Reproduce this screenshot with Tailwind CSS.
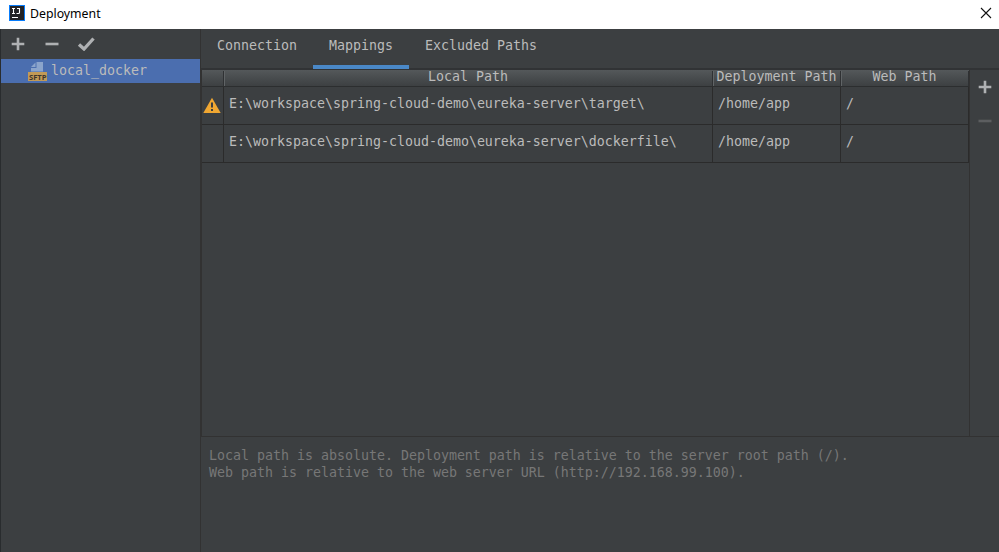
<!DOCTYPE html>
<html lang="en">
<head>
<meta charset="utf-8">
<title>Deployment</title>
<script src="https://cdn.jsdelivr.net/npm/@tailwindcss/browser@4"></script>
</head>
<body class="w-[999px] h-[552px] overflow-hidden flex flex-col bg-[#3c3f41] text-[#bbbbbb] font-['DejaVu_Sans_Mono',monospace] text-[13.29px] leading-4">
<header class="h-[29px] shrink-0 bg-white flex items-center text-black pl-[9px] pr-[7px] pb-[3px]">
<svg class="w-4 h-4 shrink-0" viewBox="0 0 16 16"><rect width="16" height="16" fill="#087cfa"/><rect x="1" y="1" width="14" height="14" fill="#222225"/><path d="M3 3.500h3M4.500 3.500v5M3 8.500h3M8 3.500h2.500v4q0 1-1 1H7.500" fill="none" stroke="#fff" stroke-width="1.100"/><path d="M3 12.500h6" stroke="#fff"/></svg>
<h1 class="ml-[5px] mt-[2px] grow font-['Noto_Sans',sans-serif] text-[12.3px] leading-4">Deployment</h1>
<svg class="w-3 h-3" viewBox="0 0 12 12"><path d="M1 1l10 10M11 1L1 11" stroke="#111" stroke-width="1.100"/></svg>
</header>
<div class="flex grow min-h-0 border-l border-[#292c2e]">
<aside class="w-[199px] shrink-0">
<div class="h-[30px] flex items-center pl-[10px]">
<svg class="w-[14px] h-[14px]" viewBox="0 0 14 14"><path d="M7 .7v12.600M.7 7h12.600" stroke="#afb1b3" stroke-width="2.600"/></svg>
<svg class="ml-5 w-[14px] h-[14px]" viewBox="0 0 14 14"><path d="M.5 7h13" stroke="#afb1b3" stroke-width="2.600"/></svg>
<svg class="ml-[18px] w-[18px] h-[14px]" viewBox="0 0 18 14"><path d="M2 7.500l5 4.500L16.500 1.500" fill="none" stroke="#afb1b3" stroke-width="3.300"/></svg>
</div>
<div class="h-6 bg-[#4b6eaf] flex items-center pl-[27px]">
<svg class="w-[19px] h-[22px] shrink-0 mt-px overflow-visible" viewBox="0 -1 19 22"><path d="M8.500 0H15v9.500H3V6h5.500z" fill="#8ba4cb"/><path d="M7.500 .5v4.500h-4.500z" fill="#8ba4cb"/><rect y="10" width="19" height="9" fill="#c29a56"/><text x="1" y="17.600" font-family="Open Sans, sans-serif" font-weight="700" font-size="7.600" fill="#3d352b">SFTP</text></svg>
<span class="ml-[4px]">local_docker</span>
</div>
</aside>
<main class="grow min-w-0 flex flex-col border-l border-[#323232]">
<nav class="h-[41px] shrink-0 border-b-2 border-[#313335] flex">
<div class="w-28 pl-4 pt-[9px]">Connection</div>
<div class="w-24 h-10 border-b-4 border-[#4a88c7] text-center pt-[9px]">Mappings</div>
<div class="pl-4 pt-[9px]">Excluded Paths</div>
</nav>
<div class="flex h-[367px] shrink-0 border-b border-[#323232]">
<div class="w-[768px] border-l border-[#323232]">
<div class="grid grid-cols-[22px_489px_128px_128px] h-[17px] border-b border-[#2c2e2f] bg-linear-to-b from-[#54585a] to-[#3d4042] text-center leading-[11px]">
<div class="border-r border-[#2f3133] h-[15px] mt-px"></div>
<div class="border-r border-[#2f3133] h-[15px] mt-px shadow-[inset_1px_0_#606466]">Local Path</div>
<div class="border-r border-[#2f3133] h-[15px] mt-px shadow-[inset_1px_0_#606466]">Deployment Path</div>
<div class="border-r border-[#2f3133] h-[15px] mt-px shadow-[inset_1px_0_#606466]">Web Path</div>
</div>
<div class="grid grid-cols-[22px_489px_128px_128px] h-[38px] border-b border-[#2b2b2b] leading-[33px]">
<div class="border-r border-[#2b2b2b] pt-[10px]"><svg class="block w-[20px] h-[17px]" viewBox="0 0 20 17"><path d="M10 .8L18.700 16H1.300z" fill="#f0a732"/><path d="M9 5.500h2v5H9zM9 12h2v2H9z" fill="#3c3f41"/></svg></div>
<div class="border-r border-[#2b2b2b] pl-[5px]">E:\workspace\spring-cloud-demo\eureka-server\target\</div>
<div class="border-r border-[#2b2b2b] pl-[5px]">/home/app</div>
<div class="border-r border-[#2b2b2b] pl-[5px]">/</div>
</div>
<div class="grid grid-cols-[22px_489px_128px_128px] h-[38px] border-b border-[#2b2b2b] leading-[33px]">
<div class="border-r border-[#2b2b2b]"></div>
<div class="border-r border-[#2b2b2b] pl-[5px]">E:\workspace\spring-cloud-demo\eureka-server\dockerfile\</div>
<div class="border-r border-[#2b2b2b] pl-[5px]">/home/app</div>
<div class="border-r border-[#2b2b2b] pl-[5px]">/</div>
</div>
</div>
<div class="grow border-l border-[#323232] flex flex-col items-center pt-[10px] gap-[20px]">
<svg class="w-[14px] h-[14px]" viewBox="0 0 14 14"><path d="M7 .7v12.600M.7 7h12.600" stroke="#afb1b3" stroke-width="2.600"/></svg>
<svg class="w-[14px] h-[14px]" viewBox="0 0 14 14"><path d="M.5 7h13" stroke="#5c5e60" stroke-width="2.600"/></svg>
</div>
</div>
<p class="pl-2 pt-[10px] text-[#777777] leading-[17px]">Local path is absolute. Deployment path is relative to the server root path (/).<br>Web path is relative to the web server URL (http://192.168.99.100).</p>
</main>
</div>
</body>
</html>
